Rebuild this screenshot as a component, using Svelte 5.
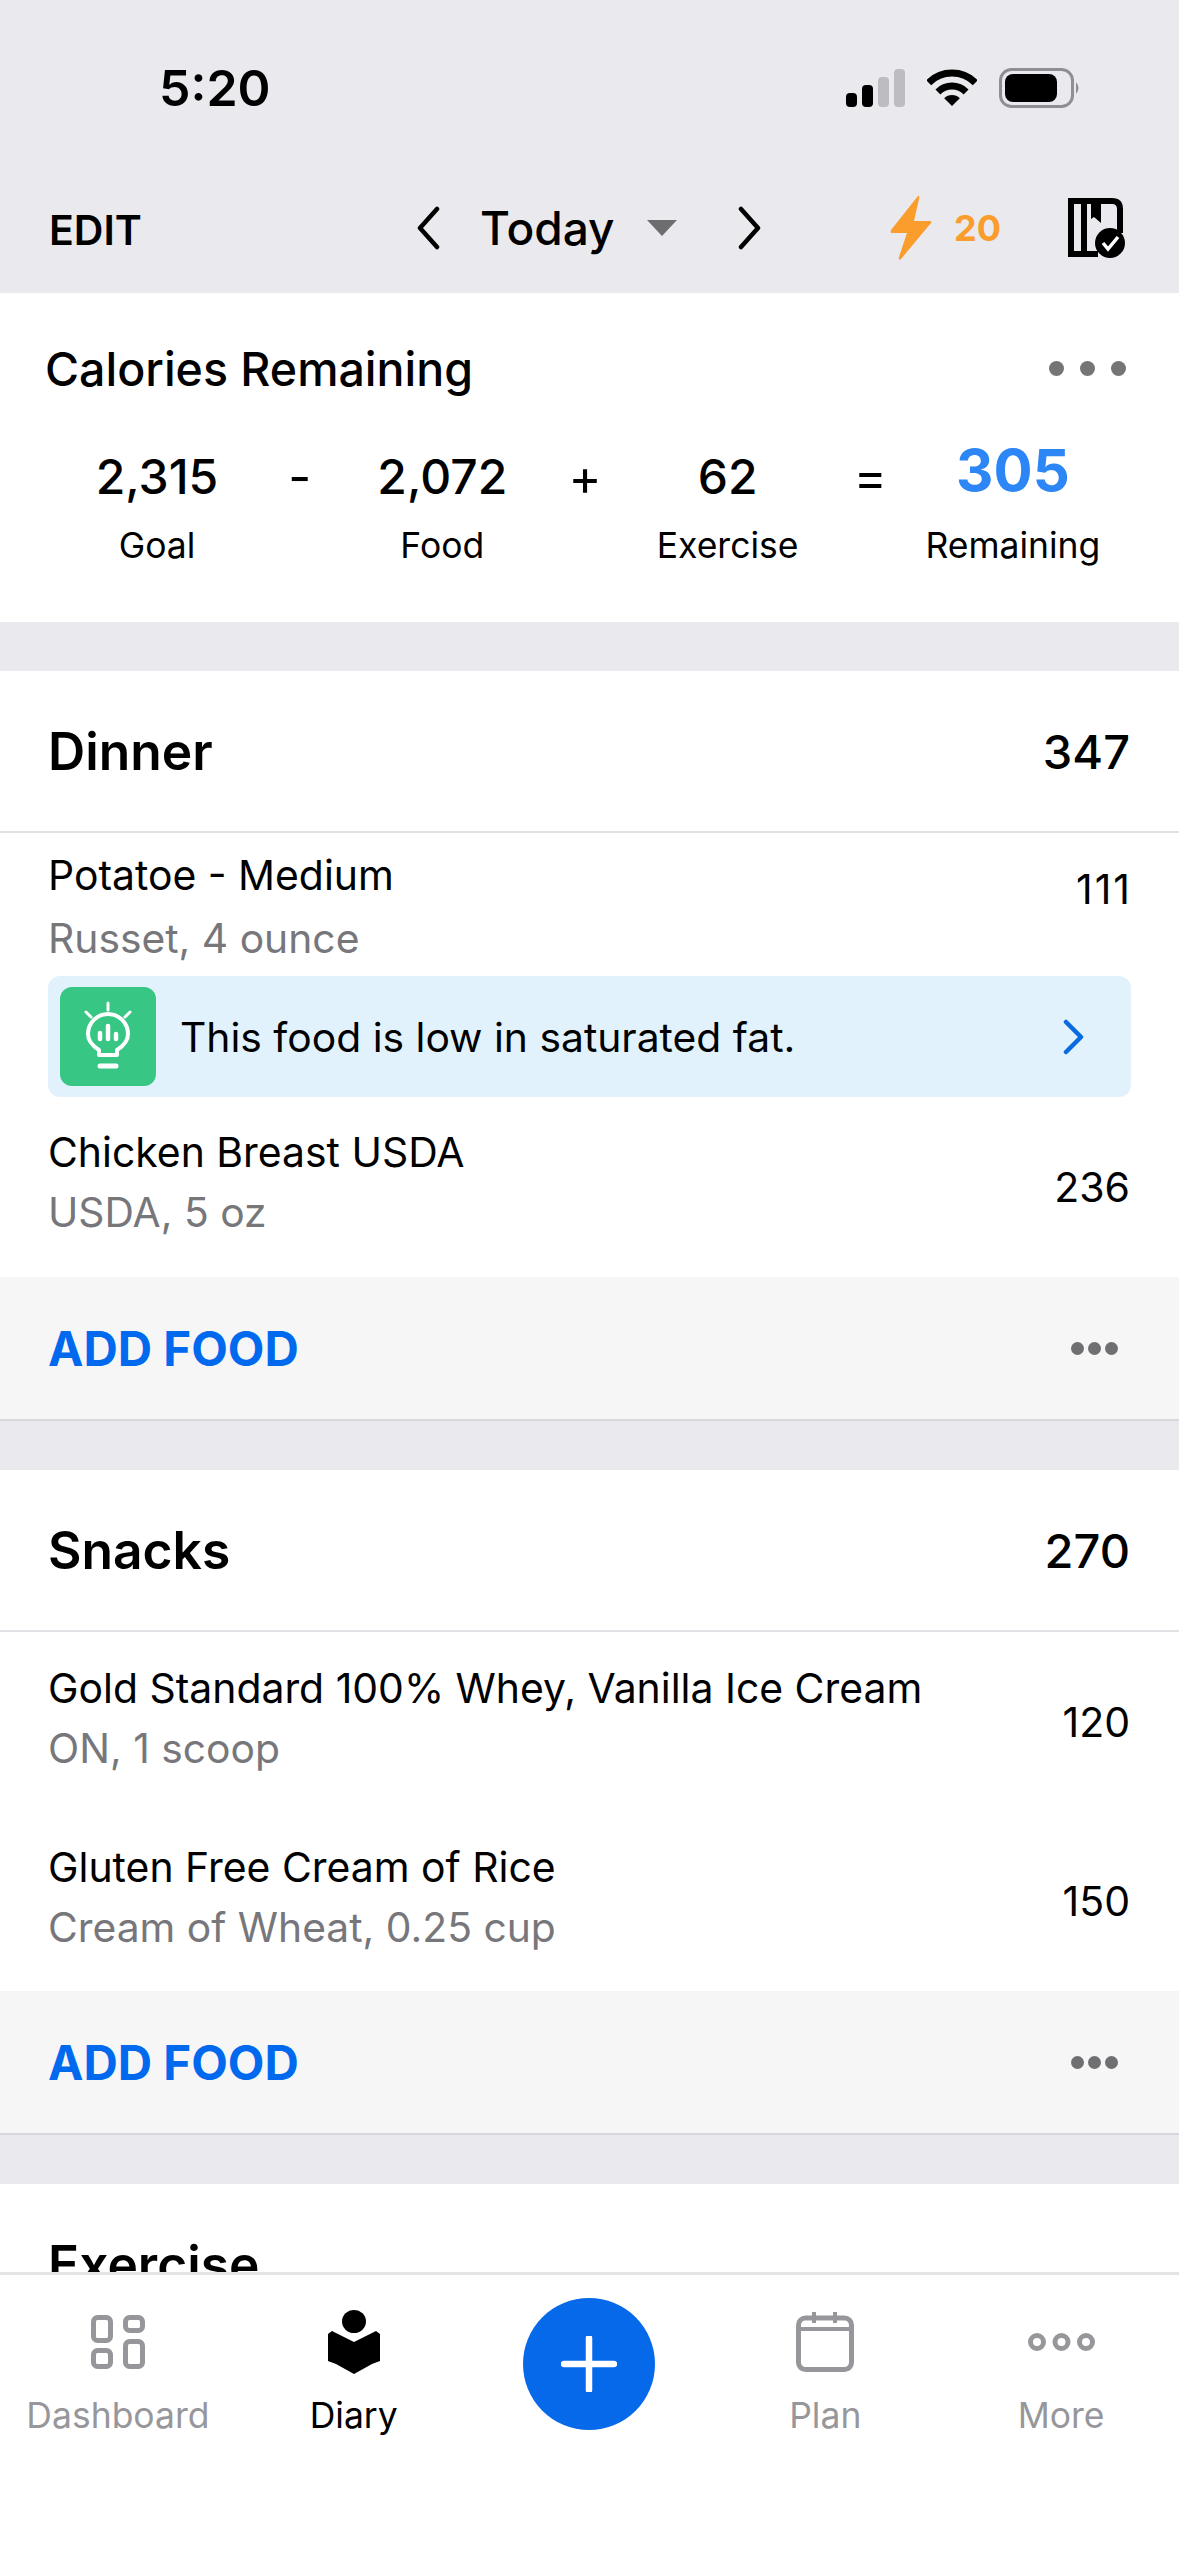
<script>
    const stats = [
        { value: "2,315", label: "Goal" },
        { op: "-" },
        { value: "2,072", label: "Food" },
        { op: "+" },
        { value: "62", label: "Exercise" },
        { op: "=" },
        { value: "305", label: "Remaining", highlight: true }
    ];

    const snacks = [
        { name: "Gold Standard 100% Whey, Vanilla Ice Cream", sub: "ON, 1 scoop", cal: 120 },
        { name: "Gluten Free Cream of Rice", sub: "Cream of Wheat, 0.25 cup", cal: 150 }
    ];
</script>

<div class="phone">
    <div class="scroll">
        <header class="top">
            <div class="status">
                <span class="clock">5:20</span>
                <div class="status-icons">
                    <svg width="59" height="38" viewBox="0 0 59 38">
                        <rect x="0" y="24" width="11" height="14" rx="4" fill="#000"/>
                        <rect x="16" y="16" width="11" height="22" rx="4" fill="#000"/>
                        <rect x="32" y="8" width="11" height="30" rx="4" fill="#bcbcc1"/>
                        <rect x="48" y="0" width="11" height="38" rx="4" fill="#bcbcc1"/>
                    </svg>
                    <svg width="50" height="38" viewBox="0 0 50 38">
                        <path d="M1.7 13.7 A33 33 0 0 1 48.3 13.7" fill="none" stroke="#000" stroke-width="7"/>
                        <path d="M10.9 22.9 A20 20 0 0 1 39.1 22.9" fill="none" stroke="#000" stroke-width="7"/>
                        <path d="M25 37 L17.2 29.2 A11 11 0 0 1 32.8 29.2 Z" fill="#000"/>
                    </svg>
                    <svg width="82" height="40" viewBox="0 0 82 40">
                        <rect x="1.5" y="1.5" width="72" height="37" rx="11" fill="none" stroke="#8e8e93" stroke-width="3"/>
                        <rect x="6" y="6" width="52" height="28" rx="8" fill="#000"/>
                        <path d="M77 14 Q82 20 77 26 Z" fill="#8e8e93"/>
                    </svg>
                </div>
            </div>
            <div class="nav">
                <span class="edit">EDIT</span>
                <div class="date">
                    <svg width="26" height="44" viewBox="0 0 26 44"><path d="M22 3 L5 22 L22 41" fill="none" stroke="#000" stroke-width="4.5" stroke-linecap="round" stroke-linejoin="round"/></svg>
                    <span class="today">Today</span>
                    <svg class="caret" width="30" height="16" viewBox="0 0 30 16"><path d="M0 0 H30 L15 16 Z" fill="#6d6d6f"/></svg>
                    <svg width="26" height="44" viewBox="0 0 26 44"><path d="M4 3 L21 22 L4 41" fill="none" stroke="#000" stroke-width="4.5" stroke-linecap="round" stroke-linejoin="round"/></svg>
                </div>
                <div class="nav-right">
                    <svg width="42" height="66" viewBox="0 0 42 66"><path d="M28 1 Q30 0 29 4 L24 26 H40 Q42 26 41 28 L11 64 Q8 66 9 62 L17 38 H2 Q0 38 1 35 Z" fill="#fb9d2c"/></svg>
                    <span class="streak">20</span>
                    <svg class="book" width="58" height="62" viewBox="0 0 58 62">
                        <path d="M0 1 H44 Q55 1 55 12 V36 H49 V12 Q49 7 44 7 H33 V26 L26 20 L23 22 V7 H19 V54 H30 V60 H0 Z M6 7 V54 H13 V7 Z" fill="#000" fill-rule="evenodd"/>
                        <circle cx="42" cy="46" r="15" fill="#000"/>
                        <path d="M35 46 L40 52 L50 40" fill="none" stroke="#fff" stroke-width="3.5"/>
                    </svg>
                </div>
            </div>
        </header>

        <section class="summary">
            <div class="summary-head">
                <span class="summary-title">Calories Remaining</span>
                <div class="dots-big"><i></i><i></i><i></i></div>
            </div>
            <div class="equation">
                {#each stats as s}
                    {#if s.op}
                        <span class="op">{s.op}</span>
                    {:else}
                        <div class="stat">
                            <span class="stat-value" class:highlight={s.highlight}>{s.value}</span>
                            <span class="stat-label">{s.label}</span>
                        </div>
                    {/if}
                {/each}
            </div>
        </section>

        <section class="meal">
            <div class="meal-head"><span class="meal-name">Dinner</span><span class="meal-total">347</span></div>
            <div class="item potato">
                <div class="item-text"><span class="item-name">Potatoe - Medium</span><span class="item-sub">Russet, 4 ounce</span></div>
                <span class="item-cal">111</span>
            </div>
            <div class="tip">
                <div class="tip-icon">
                    <svg width="56" height="72" viewBox="0 0 56 72" fill="none" stroke="#fff" stroke-linecap="round">
                        <path d="M28 2 V9 M6 11 L11 16 M50 11 L45 16" stroke-width="3"/>
                        <path d="M19 54 V49 Q8 42 8 33 A20 20 0 1 1 48 33 Q48 42 37 49 V54 Z" stroke-width="4" stroke-linejoin="round"/>
                        <path d="M20 32 V38 M28 25 V38 M36 33 V38" stroke-width="4.5"/>
                        <path d="M20 65 H36" stroke-width="5"/>
                    </svg>
                </div>
                <span class="tip-text">This food is low in saturated fat.</span>
                <svg width="24" height="36" viewBox="0 0 24 36"><path d="M4 3 L19 18 L4 33" fill="none" stroke="#0a6be0" stroke-width="4.5" stroke-linecap="round" stroke-linejoin="round"/></svg>
            </div>
            <div class="item chicken">
                <div class="item-text"><span class="item-name">Chicken Breast USDA</span><span class="item-sub">USDA, 5 oz</span></div>
                <span class="item-cal">236</span>
            </div>
            <div class="add"><span class="add-label">ADD FOOD</span><div class="dots-small"><i></i><i></i><i></i></div></div>
        </section>

        <section class="meal">
            <div class="meal-head"><span class="meal-name">Snacks</span><span class="meal-total">270</span></div>
            {#each snacks as item}
                <div class="item snack">
                    <div class="item-text"><span class="item-name">{item.name}</span><span class="item-sub">{item.sub}</span></div>
                    <span class="item-cal">{item.cal}</span>
                </div>
            {/each}
            <div class="add"><span class="add-label">ADD FOOD</span><div class="dots-small"><i></i><i></i><i></i></div></div>
        </section>

        <section class="meal">
            <div class="meal-head"><span class="meal-name">Exercise</span></div>
        </section>
    </div>

    <nav class="tabs">
        <div class="tab">
            <div class="tab-icon">
                <svg width="54" height="54" viewBox="0 0 54 54" fill="none" stroke="#97979b" stroke-width="5">
                    <rect x="2.5" y="2.5" width="17" height="23" rx="4"/>
                    <rect x="34.5" y="2.5" width="17" height="13" rx="4"/>
                    <rect x="2.5" y="35.5" width="17" height="16" rx="4"/>
                    <rect x="34.5" y="26.5" width="17" height="25" rx="4"/>
                </svg>
            </div>
            <span>Dashboard</span>
        </div>
        <div class="tab active">
            <div class="tab-icon">
                <svg width="54" height="64" viewBox="0 0 54 64">
                    <ellipse cx="27" cy="11.5" rx="12" ry="11.5" fill="#000"/>
                    <path d="M1 24 L5 21 L27 32 L49 21 L53 24 V51 L45 54 L27 64 L9 54 L1 51 Z" fill="#000"/>
                </svg>
            </div>
            <span>Diary</span>
        </div>
        <div class="tab plus-slot">
            <div class="plus">
                <svg width="56" height="56" viewBox="0 0 56 56"><path d="M28 2 V54 M3 28 H53" stroke="#fff" stroke-width="6.5" stroke-linecap="round"/></svg>
            </div>
        </div>
        <div class="tab">
            <div class="tab-icon">
                <svg width="58" height="60" viewBox="0 0 58 60" fill="none" stroke="#97979b" stroke-width="5">
                    <rect x="2.5" y="6" width="53" height="51.5" rx="7"/>
                    <path d="M3 17 H55" stroke-width="4"/>
                    <path d="M18 0 V11 M39 0 V11" stroke-width="4"/>
                </svg>
            </div>
            <span>Plan</span>
        </div>
        <div class="tab">
            <div class="tab-icon">
                <svg width="67" height="18" viewBox="0 0 67 18" fill="none" stroke="#97979b" stroke-width="5">
                    <circle cx="9" cy="9" r="6.5"/><circle cx="33.5" cy="9" r="6.5"/><circle cx="58" cy="9" r="6.5"/>
                </svg>
            </div>
            <span>More</span>
        </div>
    </nav>
</div>

<style>
    :global(body) {
        margin: 0;
        background: #fff;
    }

    .phone {
        width: 1179px;
        height: 2556px;
        display: flex;
        flex-direction: column;
        overflow: hidden;
        font-family: Inter, "Liberation Sans", sans-serif;
        color: #000;
        background: #fff;
    }

    .scroll {
        height: 2272px;
        overflow: hidden;
        background: #e9e9ee;
    }

    .top {
        height: 293px;
    }

    .status {
        height: 175px;
        display: flex;
        align-items: center;
        justify-content: space-between;
        padding: 0 98px 0 159px;
        box-sizing: border-box;
    }

    .clock {
        font-size: 50px;
        font-weight: 600;
    }

    .status-icons {
        display: flex;
        align-items: center;
        gap: 22px;
    }

    .nav {
        display: flex;
        align-items: center;
        height: 106px;
        padding: 0 53px 0 49px;
    }

    .edit {
        font-size: 41px;
        font-weight: 600;
        width: 366px;
        margin-top: 3px;
    }

    .date {
        display: flex;
        align-items: center;
    }

    .today {
        font-size: 46px;
        font-weight: 500;
        margin: 0 32px 0 39px;
    }

    .caret {
        margin-right: 60px;
    }

    .nav-right {
        display: flex;
        align-items: center;
        margin-left: auto;
    }

    .streak {
        font-size: 36px;
        font-weight: 700;
        color: #fb9d2c;
        margin-left: 22px;
    }

    .book {
        margin-left: 67px;
    }

    .summary {
        height: 329px;
        background: #fff;
        box-sizing: border-box;
        padding: 46px 53px 0 45px;
    }

    .summary-head {
        display: flex;
        justify-content: space-between;
        align-items: center;
    }

    .summary-title {
        font-size: 46.5px;
        font-weight: 500;
        margin-top: 2px;
    }

    .dots-big {
        display: flex;
        gap: 16px;
    }

    .dots-big i {
        width: 15px;
        height: 15px;
        border-radius: 50%;
        background: #757578;
    }

    .equation {
        display: grid;
        grid-template-columns: 194px 91.3px 194px 91.3px 194px 91.3px 194px;
        margin: 41px 0 0 15px;
    }

    .stat {
        display: flex;
        flex-direction: column;
        align-items: center;
    }

    .stat-value {
        font-size: 48px;
        font-weight: 500;
        height: 78px;
        line-height: 78px;
    }

    .stat-value.highlight {
        font-size: 58px;
        font-weight: 700;
        color: #2c86f5;
        margin-top: -7px;
        height: 85px;
    }

    .stat-label {
        font-size: 35.5px;
        margin-top: 8px;
    }

    .op {
        font-size: 50px;
        text-align: center;
        line-height: 78px;
    }

    .meal {
        background: #fff;
        margin-top: 49px;
    }

    .meal-head {
        height: 160px;
        border-bottom: 2px solid #e2e2e6;
        padding: 0 49px 0 48px;
        display: flex;
        justify-content: space-between;
        align-items: center;
    }

    .meal-name {
        font-size: 51.5px;
        font-weight: 600;
    }

    .meal-total {
        font-size: 47px;
        font-weight: 500;
    }

    .item {
        display: flex;
        justify-content: space-between;
        align-items: center;
        padding: 0 49px 0 48px;
    }

    .item.potato {
        height: 143px;
    }

    .item.chicken {
        height: 180px;
    }

    .item.snack {
        height: 179.5px;
    }

    .item-text {
        display: flex;
        flex-direction: column;
        gap: 12px;
    }

    .potato .item-text {
        gap: 15px;
        margin-top: 4px;
    }

    .potato .item-cal {
        margin-bottom: 32px;
        letter-spacing: 2px;
        margin-right: -2px;
    }

    .chicken .item-text {
        margin-top: -10px;
    }

    .snack .item-text {
        margin-top: -8px;
    }

    .item-name {
        font-size: 40.9px;
        line-height: 48px;
    }

    .item-sub {
        font-size: 40.8px;
        line-height: 48px;
        color: #77777b;
    }

    .item-cal {
        font-size: 41px;
    }

    .tip {
        height: 121px;
        margin: 0 48px 0;
        border-radius: 12px;
        background: #e2f2fd;
        display: flex;
        align-items: center;
        padding: 0 45px 0 12px;
    }

    .tip-icon {
        width: 96px;
        height: 99px;
        border-radius: 12px;
        background: #37c684;
        display: flex;
        align-items: center;
        justify-content: center;
    }

    .tip-text {
        font-size: 40.8px;
        margin-left: 24px;
        flex: 1;
    }

    .add {
        height: 142px;
        background: #f6f6f7;
        border-bottom: 2px solid #d8d8dc;
        padding: 0 61px 0 48px;
        display: flex;
        justify-content: space-between;
        align-items: center;
    }

    .add-label {
        font-size: 47.5px;
        font-weight: 700;
        color: #0069ee;
    }

    .dots-small {
        display: flex;
        gap: 4px;
    }

    .dots-small i {
        width: 13px;
        height: 13px;
        border-radius: 50%;
        background: #6f6f72;
    }

    .tabs {
        flex: 1;
        border-top: 3px solid #e4e4e6;
        background: #fff;
        display: grid;
        grid-template-columns: repeat(5, 235.8px);
        align-items: start;
    }

    .tab {
        display: flex;
        flex-direction: column;
        align-items: center;
        padding-top: 29px;
        font-size: 35.5px;
        color: #97979b;
        gap: 14px;
    }

    .tab-icon {
        height: 76px;
        display: flex;
        align-items: center;
        justify-content: center;
    }

    .tab.active {
        color: #000;
    }

    .plus-slot {
        padding-top: 23px;
    }

    .plus {
        width: 132px;
        height: 132px;
        border-radius: 50%;
        background: #0669ea;
        display: flex;
        align-items: center;
        justify-content: center;
    }
</style>
